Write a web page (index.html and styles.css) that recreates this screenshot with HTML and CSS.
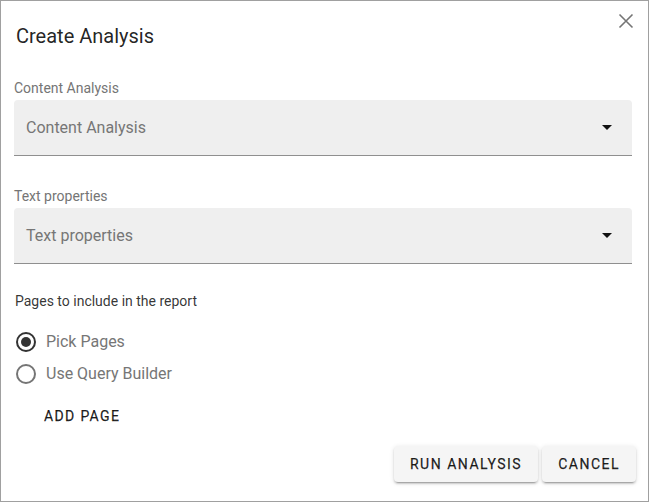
FILE: index.html
```html
<!DOCTYPE html>
<html lang="en">
<head>
<meta charset="utf-8">
<title>Create Analysis</title>
<link rel="stylesheet" href="styles.css">
</head>
<body>
<div class="dialog">
  <button class="close" aria-label="Close">
    <svg width="16" height="16" viewBox="0 0 16 16"><path d="M1.5 1.5 L14.5 14.5 M14.5 1.5 L1.5 14.5" stroke="#757575" stroke-width="1.6" fill="none"/></svg>
  </button>
  <h1 class="title">Create Analysis</h1>

  <div class="field">
    <label class="field-label">Content Analysis</label>
    <div class="select">
      <span class="select-value">Content Analysis</span>
      <span class="arrow"></span>
    </div>
  </div>

  <div class="field">
    <label class="field-label">Text properties</label>
    <div class="select">
      <span class="select-value">Text properties</span>
      <span class="arrow"></span>
    </div>
  </div>

  <div class="pages-label">Pages to include in the report</div>
  <div class="radios">
    <div class="radio-row"><span class="radio checked"></span><span class="radio-text">Pick Pages</span></div>
    <div class="radio-row"><span class="radio"></span><span class="radio-text">Use Query Builder</span></div>
  </div>
  <button class="text-btn">ADD PAGE</button>

  <div class="actions">
    <button class="raised-btn">RUN ANALYSIS</button>
    <button class="raised-btn">CANCEL</button>
  </div>
</div>
</body>
</html>
```
FILE: styles.css
```css
* { box-sizing: border-box; }
html, body { margin: 0; padding: 0; background: #fff; }
body { font-family: Roboto, "Liberation Sans", sans-serif; }

.dialog {
  position: relative;
  width: 649px;
  height: 502px;
  border: 1px solid #a0a0a0;
  display: flex;
  flex-direction: column;
  padding: 23px 12px 19px 13px;
}

.close {
  position: absolute;
  top: 12px;
  right: 14px;
  width: 16px;
  height: 16px;
  padding: 0;
  border: 0;
  background: none;
  display: flex;
}

.title {
  margin: 0 0 30px 2px;
  font-size: 20px;
  line-height: 24px;
  font-weight: 400;
  color: rgba(0,0,0,0.87);
}

.field { display: flex; flex-direction: column; margin-bottom: 30px; }
.field-label {
  font-size: 14px;
  line-height: 20px;
  color: #757575;
  margin-bottom: 2px;
}
.select {
  height: 56px;
  width: 618px;
  background: #efefef;
  border-radius: 4px 4px 0 0;
  border-bottom: 1px solid #8f8f8f;
  display: flex;
  align-items: center;
  padding: 0 20px 0 12px;
}
.select-value {
  flex: 1;
  font-size: 16px;
  line-height: 24px;
  color: #767676;
}
.arrow {
  width: 0; height: 0;
  border-left: 5px solid transparent;
  border-right: 5px solid transparent;
  border-top: 5px solid #111;
}

.pages-label {
  margin-top: -3px;
  margin-left: 1px;
  font-size: 14px;
  line-height: 20px;
  color: rgba(0,0,0,0.8);
}
.radios { margin-top: 15px; display: flex; flex-direction: column; }
.radio-row { height: 32px; display: flex; align-items: center; padding-left: 2px; }
.radio {
  width: 20px; height: 20px;
  border-radius: 50%;
  border: 2px solid #757575;
  display: flex; align-items: center; justify-content: center;
  margin-right: 10px;
}
.radio.checked { border-color: #333; }
.radio.checked::after {
  content: "";
  width: 10px; height: 10px;
  border-radius: 50%;
  background: #333;
}
.radio-text { font-size: 16px; line-height: 24px; color: #767676; }

.text-btn {
  align-self: flex-start;
  margin-top: 8px;
  margin-left: 14px;
  height: 36px;
  padding: 0 16px;
  border: 0;
  background: none;
  font-family: Roboto, "Liberation Sans", sans-serif;
  font-size: 14px;
  font-weight: 400;
  letter-spacing: 1.35px;
  color: rgba(0,0,0,0.87);
  -webkit-text-stroke: 0.25px rgba(0,0,0,0.87);
}

.actions {
  margin-top: 12px;
  display: flex;
  justify-content: flex-end;
  gap: 4px;
}
.raised-btn {
  height: 36px;
  padding: 0 16px;
  border: 0;
  border-radius: 4px;
  background: #f5f5f5;
  box-shadow: 0 3px 1px -2px rgba(0,0,0,0.2), 0 2px 2px 0 rgba(0,0,0,0.14), 0 1px 5px 0 rgba(0,0,0,0.12);
  font-family: Roboto, "Liberation Sans", sans-serif;
  font-size: 14px;
  font-weight: 400;
  letter-spacing: 1.5px;
  color: rgba(0,0,0,0.87);
  -webkit-text-stroke: 0.25px rgba(0,0,0,0.87);
}
```
